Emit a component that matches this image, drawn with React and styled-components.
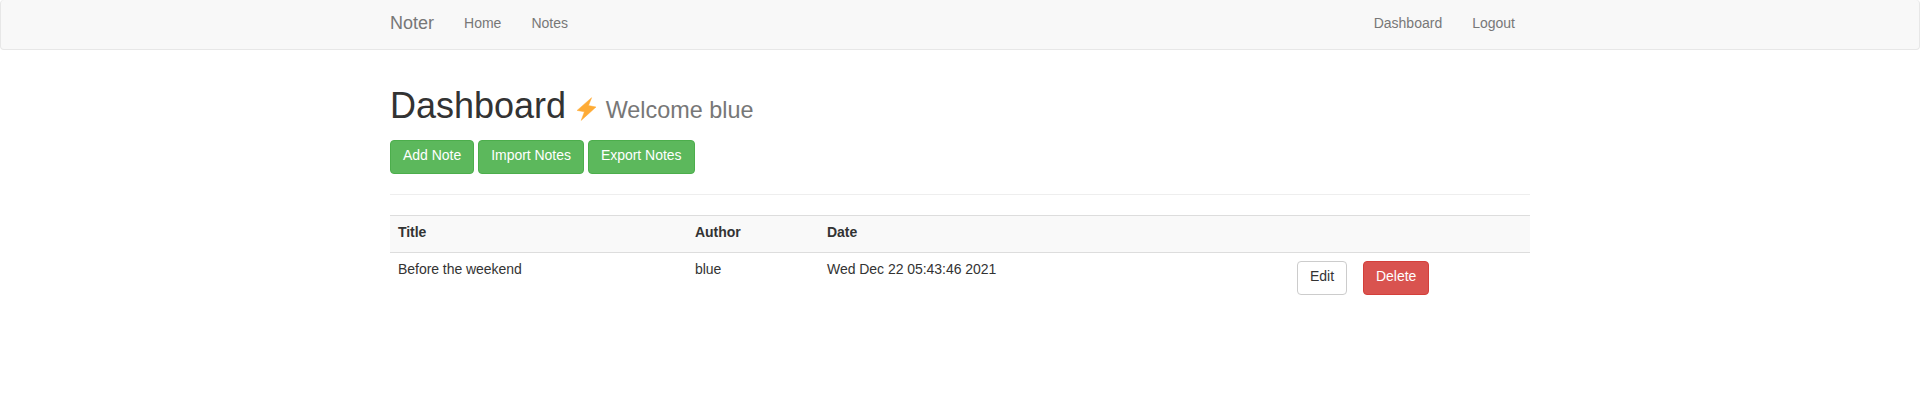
import React from 'react';
import styled, { createGlobalStyle } from 'styled-components';

const Global = createGlobalStyle`
  *, *::before, *::after { box-sizing: border-box; }
  body {
    margin: 0;
    font-family: "Helvetica Neue", Helvetica, "Liberation Sans", Arial, sans-serif;
    font-size: 14px;
    line-height: 1.42857143;
    color: #333;
    background: #fff;
  }
`;

const Navbar = styled.nav`
  height: 50px;
  margin-bottom: 20px;
  background: #f8f8f8;
  border: 1px solid #e7e7e7;
  border-top-width: 0;
  border-radius: 4px;
`;

const Container = styled.div`
  width: 1170px;
  margin: 0 auto;
  padding: 0 15px;
`;

const NavRow = styled(Container)`
  display: flex;
  justify-content: space-between;
`;

const NavGroup = styled.div`
  display: flex;
`;

const Brand = styled.a`
  padding: 13px 15px 15px 0;
  font-size: 18px;
  line-height: 20px;
  color: #777;
`;

const NavLink = styled.a`
  padding: 13px 15px 15px;
  line-height: 20px;
  color: #777;
`;

const Title = styled.h1`
  height: 40px;
  margin: 36px 0 14px;
  font-size: 36px;
  font-weight: 500;
  line-height: 1.1;
`;

const Welcome = styled.small`
  font-size: 65%;
  font-weight: 400;
  line-height: 1;
  color: #777;
`;

const Bolt = styled.svg`
  width: 23px;
  height: 24px;
  vertical-align: -3px;
`;

const variants = {
  success: 'color:#fff;background:#5cb85c;border-color:#4cae4c;',
  danger: 'color:#fff;background:#d9534f;border-color:#d43f3a;',
  plain: 'color:#333;background:#fff;border-color:#ccc;',
};

const Button = styled.button`
  padding: 4px 12px 8px;
  font: inherit;
  letter-spacing: -0.03px;
  border: 1px solid;
  border-radius: 4px;
  ${(p) => variants[p.$variant]}
`;

const Actions = styled.div`
  display: flex;
  gap: 4px;
`;

const Rule = styled.hr`
  margin: 20px 0;
  border: 0;
  border-top: 1px solid #eee;
`;

const Table = styled.table`
  width: 100%;
  table-layout: fixed;
  border-collapse: collapse;
  letter-spacing: -0.04px;
`;

const Column = styled.col`
  width: ${(p) => p.$width}px;
`;

const HeadRow = styled.tr`
  background: #f9f9f9;
`;

const Head = styled.th`
  padding: 6px 8px 10px;
  text-align: left;
  border-top: 1px solid #ddd;
`;

const Cell = styled.td`
  padding: 6px 8px 10px;
  vertical-align: top;
  border-top: 1px solid #ddd;
`;

const ActionCell = styled(Cell)`
  padding: 8px;
`;

export default function App() {
  return (
    <>
      <Global />
      <Navbar>
        <NavRow>
          <NavGroup>
            <Brand>Noter</Brand>
            <NavLink>Home</NavLink>
            <NavLink>Notes</NavLink>
          </NavGroup>
          <NavGroup>
            <NavLink>Dashboard</NavLink>
            <NavLink>Logout</NavLink>
          </NavGroup>
        </NavRow>
      </Navbar>
      <Container>
        <Title>
          Dashboard{' '}
          <Welcome>
            <Bolt viewBox="0 0 23 24" aria-hidden="true">
              <path d="M15.6 .7 1.1 13.4 8.4 14.8 5.2 23.4 20 10 12.5 8.6z" fill="#feab35" stroke="#feab35" strokeWidth=".5" strokeLinejoin="round" />
            </Bolt>{' '}
            Welcome blue
          </Welcome>
        </Title>
        <Actions>
          <Button $variant="success">Add Note</Button>
          <Button $variant="success">Import Notes</Button>
          <Button $variant="success">Export Notes</Button>
        </Actions>
        <Rule />
        <Table>
          <colgroup>
            <Column $width={297} />
            <Column $width={132} />
            <Column $width={470} />
            <Column $width={66} />
            <Column $width={175} />
          </colgroup>
          <thead>
            <HeadRow>
              <Head>Title</Head>
              <Head>Author</Head>
              <Head>Date</Head>
              <Head />
              <Head />
            </HeadRow>
          </thead>
          <tbody>
            <tr>
              <Cell>Before the weekend</Cell>
              <Cell>blue</Cell>
              <Cell>Wed Dec 22 05:43:46 2021</Cell>
              <ActionCell><Button $variant="plain">Edit</Button></ActionCell>
              <ActionCell><Button $variant="danger">Delete</Button></ActionCell>
            </tr>
          </tbody>
        </Table>
      </Container>
    </>
  );
}
